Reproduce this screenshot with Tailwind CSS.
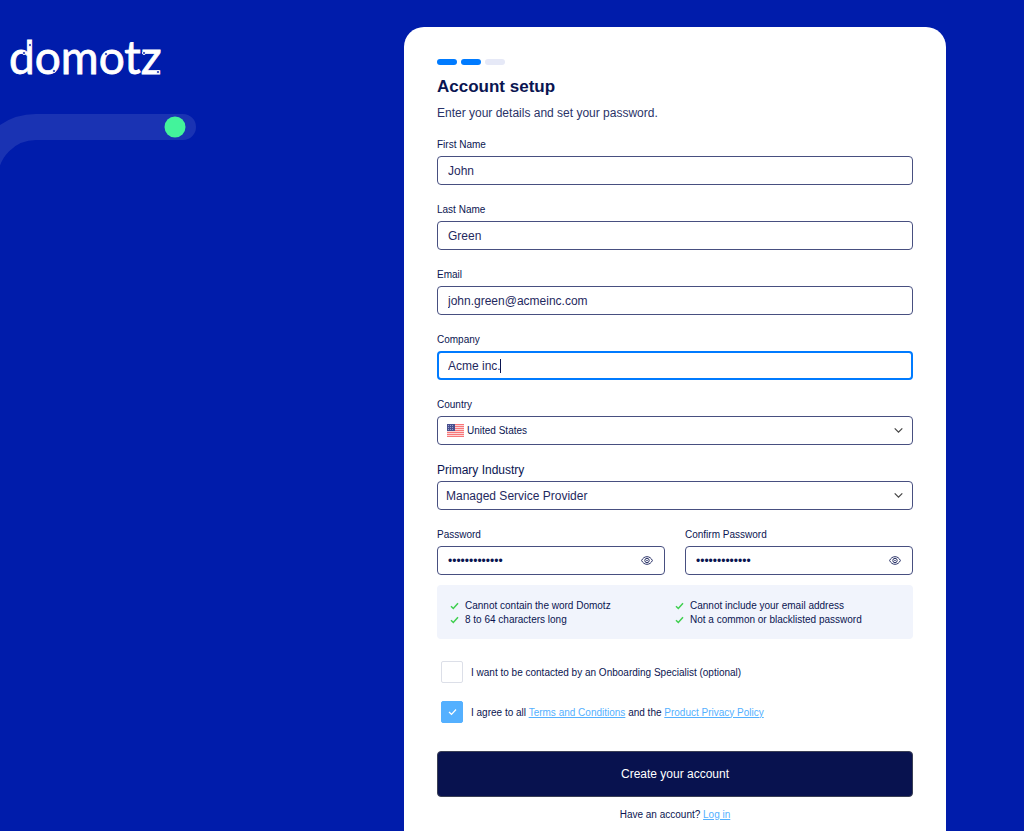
<!DOCTYPE html>
<html lang="en">
<head>
  <meta charset="UTF-8">
  <meta name="viewport" content="width=device-width, initial-scale=1.0">
  <title>Domotz - Account setup</title>
  <script src="https://cdn.jsdelivr.net/npm/@tailwindcss/browser@4"></script>
  <link rel="icon" href="data:,">
</head>
<body class="bg-[#001cab] min-h-screen flex pt-[27px] font-['Liberation_Sans',Arial,sans-serif] text-[#0a1551]">

  <aside class="w-[404px] shrink-0">
    <a href="#" aria-label="Domotz home" class="block mt-2 ml-2">
      <svg width="170" height="60" viewBox="0 0 170 60">
        <text x="1" y="39" font-family="Lato, sans-serif" font-size="46" fill="#fff" stroke="#fff" stroke-width="0.8">domotz</text>
        <!-- network nodes -->
        <g fill="#001cab" stroke="#fff" stroke-width="1">
          <circle cx="22" cy="10" r="1.5"/>
          <circle cx="16" cy="18" r="1.5"/>
          <circle cx="46" cy="36" r="1.5"/>
          <circle cx="98" cy="19" r="1.5"/>
          <circle cx="136" cy="18" r="1.5"/>
          <circle cx="150" cy="37" r="1.5"/>
        </g>
      </svg>
    </a>
    <svg class="mt-[18px]" width="200" height="70" viewBox="0 0 200 70" fill="none">
      <path d="M183 14H36A51 51 0 0 0 -15 65" stroke="#fff" stroke-opacity="0.1" stroke-width="26" stroke-linecap="round"/>
      <circle cx="175" cy="14" r="10.5" fill="#43f39b"/>
    </svg>
  </aside>

  <main class="flex-1 mr-[78px] bg-white rounded-t-[20px] px-[33px] pt-8">
    <div class="flex gap-1">
      <span class="w-5 h-[6px] rounded-full bg-[#007bff]"></span>
      <span class="w-5 h-[6px] rounded-full bg-[#007bff]"></span>
      <span class="w-5 h-[6px] rounded-full bg-[#e6e9f7]"></span>
    </div>
    <h1 class="mt-3 text-[17px] leading-5 font-bold">Account setup</h1>
    <p class="mt-2 text-[12px] leading-4 text-[#2a3368]">Enter your details and set your password.</p>

    <form class="mt-4" onsubmit="return false;">
      <div class="flex flex-col gap-[17px]">
        <div class="flex flex-col gap-[3px]">
          <label for="first-name" class="text-[10px] leading-4">First Name</label>
          <input id="first-name" type="text" value="John" class="w-full h-[29px] px-[10px] text-[12px] text-[#1f2960] border border-[#474f80] rounded-sm">
        </div>
        <div class="flex flex-col gap-[3px]">
          <label for="last-name" class="text-[10px] leading-4">Last Name</label>
          <input id="last-name" type="text" value="Green" class="w-full h-[29px] px-[10px] text-[12px] text-[#1f2960] border border-[#474f80] rounded-sm">
        </div>
        <div class="flex flex-col gap-[3px]">
          <label for="email" class="text-[10px] leading-4">Email</label>
          <input id="email" type="email" value="john.green@acmeinc.com" class="w-full h-[29px] px-[10px] text-[12px] text-[#1f2960] border border-[#474f80] rounded-sm">
        </div>
        <div class="flex flex-col gap-[3px]">
          <label for="company" class="text-[10px] leading-4">Company</label>
          <div class="relative">
            <input id="company" type="text" value="Acme inc." class="block w-full h-[29px] px-[9px] text-[12px] text-[#1f2960] border-2 border-[#007bff] rounded-sm caret-transparent outline-none">
            <span class="absolute left-[63px] top-2 w-px h-[14px] bg-[#0a1551]"></span>
          </div>
        </div>
        <div class="flex flex-col gap-[3px]">
          <label for="country" class="text-[10px] leading-4">Country</label>
          <div class="relative">
            <select id="country" class="block appearance-none w-full h-[29px] pl-[29px] pr-8 text-[10px] border border-[#474f80] rounded-sm bg-white">
              <option>United States</option>
              <option>United Kingdom</option>
            </select>
            <svg class="absolute left-[10px] top-2 pointer-events-none" width="17" height="13" viewBox="0 0 17 13">
              <path fill="#fcd5d6" d="M0 0h17v13H0z"/>
              <path stroke="#f8777a" d="M0 .5h17M0 2.5h17M0 4.5h17M0 6.5h17M0 8.5h17M0 10.5h17M0 12.5h17"/>
              <path fill="#49508f" d="M0 0h8v7H0z"/>
              <path stroke="#9a9fca" stroke-dasharray="1 1" d="M1 1.5h6M1 3.5h6M1 5.5h6"/>
            </svg>
            <svg class="absolute right-[10px] top-[11px] pointer-events-none" width="9" height="7" viewBox="0 0 9 7" fill="none" stroke="#444" stroke-width="1.2"><path d="M.7 1.3l3.8 3.8 3.8-3.8"/></svg>
          </div>
        </div>
        <div class="flex flex-col gap-[3px]">
          <label for="industry" class="text-[12px] leading-4">Primary Industry</label>
          <div class="relative">
            <select id="industry" class="block appearance-none w-full h-[29px] pl-2 pr-8 text-[12px] text-[#1f2960] border border-[#474f80] rounded-sm bg-white">
              <option>Managed Service Provider</option>
              <option>Other</option>
            </select>
            <svg class="absolute right-[10px] top-[11px] pointer-events-none" width="9" height="7" viewBox="0 0 9 7" fill="none" stroke="#444" stroke-width="1.2"><path d="M.7 1.3l3.8 3.8 3.8-3.8"/></svg>
          </div>
        </div>
        <div class="grid grid-cols-2 gap-5">
          <div class="flex flex-col gap-[3px]">
            <label for="password" class="text-[10px] leading-4">Password</label>
            <div class="relative">
              <input id="password" type="password" value="Sunny#Day2024" class="block w-full h-[29px] pl-[10px] pr-8 text-[12px] border border-[#474f80] rounded-sm">
              <button type="button" aria-label="Show password" class="absolute right-3 top-[10px]">
                <svg width="12" height="9" viewBox="0 0 12 9" fill="none" stroke="#2a3368"><path d="M.6 4.5C1.8 2 3.7.7 6 .7s4.2 1.3 5.4 3.8C10.2 7 8.3 8.3 6 8.3S1.8 7 .6 4.5z"/><circle cx="6" cy="4.5" r="2.2"/><circle cx="6" cy="4.5" r=".4"/></svg>
              </button>
            </div>
          </div>
          <div class="flex flex-col gap-[3px]">
            <label for="confirm" class="text-[10px] leading-4">Confirm Password</label>
            <div class="relative">
              <input id="confirm" type="password" value="Sunny#Day2024" class="block w-full h-[29px] pl-[10px] pr-8 text-[12px] border border-[#474f80] rounded-sm">
              <button type="button" aria-label="Show confirmed password" class="absolute right-3 top-[10px]">
                <svg width="12" height="9" viewBox="0 0 12 9" fill="none" stroke="#2a3368"><path d="M.6 4.5C1.8 2 3.7.7 6 .7s4.2 1.3 5.4 3.8C10.2 7 8.3 8.3 6 8.3S1.8 7 .6 4.5z"/><circle cx="6" cy="4.5" r="2.2"/><circle cx="6" cy="4.5" r=".4"/></svg>
              </button>
            </div>
          </div>
        </div>
      </div>

      <ul class="mt-[10px] px-[13px] pt-[14px] pb-3 grid grid-cols-2 rounded-sm bg-[#f1f4fc] text-[10px] leading-[14px]">
        <li class="flex items-center gap-[6px]">
          <svg width="9" height="8" viewBox="0 0 9 8" fill="none" stroke="#3fcf4f" stroke-width="1.5"><path d="M1 4.3l2.3 2.2L8 1.2"/></svg>
          Cannot contain the word Domotz
        </li>
        <li class="flex items-center gap-[6px]">
          <svg width="9" height="8" viewBox="0 0 9 8" fill="none" stroke="#3fcf4f" stroke-width="1.5"><path d="M1 4.3l2.3 2.2L8 1.2"/></svg>
          Cannot include your email address
        </li>
        <li class="flex items-center gap-[6px]">
          <svg width="9" height="8" viewBox="0 0 9 8" fill="none" stroke="#3fcf4f" stroke-width="1.5"><path d="M1 4.3l2.3 2.2L8 1.2"/></svg>
          8 to 64 characters long
        </li>
        <li class="flex items-center gap-[6px]">
          <svg width="9" height="8" viewBox="0 0 9 8" fill="none" stroke="#3fcf4f" stroke-width="1.5"><path d="M1 4.3l2.3 2.2L8 1.2"/></svg>
          Not a common or blacklisted password
        </li>
      </ul>

      <div class="mt-[22px] pl-1 flex flex-col gap-[18px] text-[10px]">
        <div class="flex items-center gap-2">
          <input id="contact" type="checkbox" class="appearance-none size-[22px] border border-[#dcdfe8] rounded-xs bg-white checked:bg-[#54b0ff]">
          <label for="contact">I want to be contacted by an Onboarding Specialist (optional)</label>
        </div>
        <div class="flex items-center gap-2">
          <span class="relative size-[22px]">
            <input id="agree" type="checkbox" checked class="block appearance-none size-[22px] border border-[#54b0ff] rounded-xs checked:bg-[#54b0ff]">
            <svg class="absolute left-[7px] top-[7px] pointer-events-none" width="9" height="8" viewBox="0 0 9 8" fill="none" stroke="#fff" stroke-width="1.2"><path d="M1 4l2.5 2.3L8 1.5"/></svg>
          </span>
          <label for="agree">I agree to all <a href="#" class="text-[#54b0ff] underline">Terms and Conditions</a> and the <a href="#" class="text-[#54b0ff] underline">Product Privacy Policy</a></label>
        </div>
      </div>

      <button type="submit" class="mt-7 w-full h-[46px] rounded-sm border border-[#3a3f55] bg-[#08124f] text-white text-[12px]">Create your account</button>
      <p class="mt-[10px] text-center text-[10px] leading-4">Have an account? <a href="#" class="text-[#54b0ff] underline">Log in</a></p>
    </form>
  </main>

</body>
</html>
